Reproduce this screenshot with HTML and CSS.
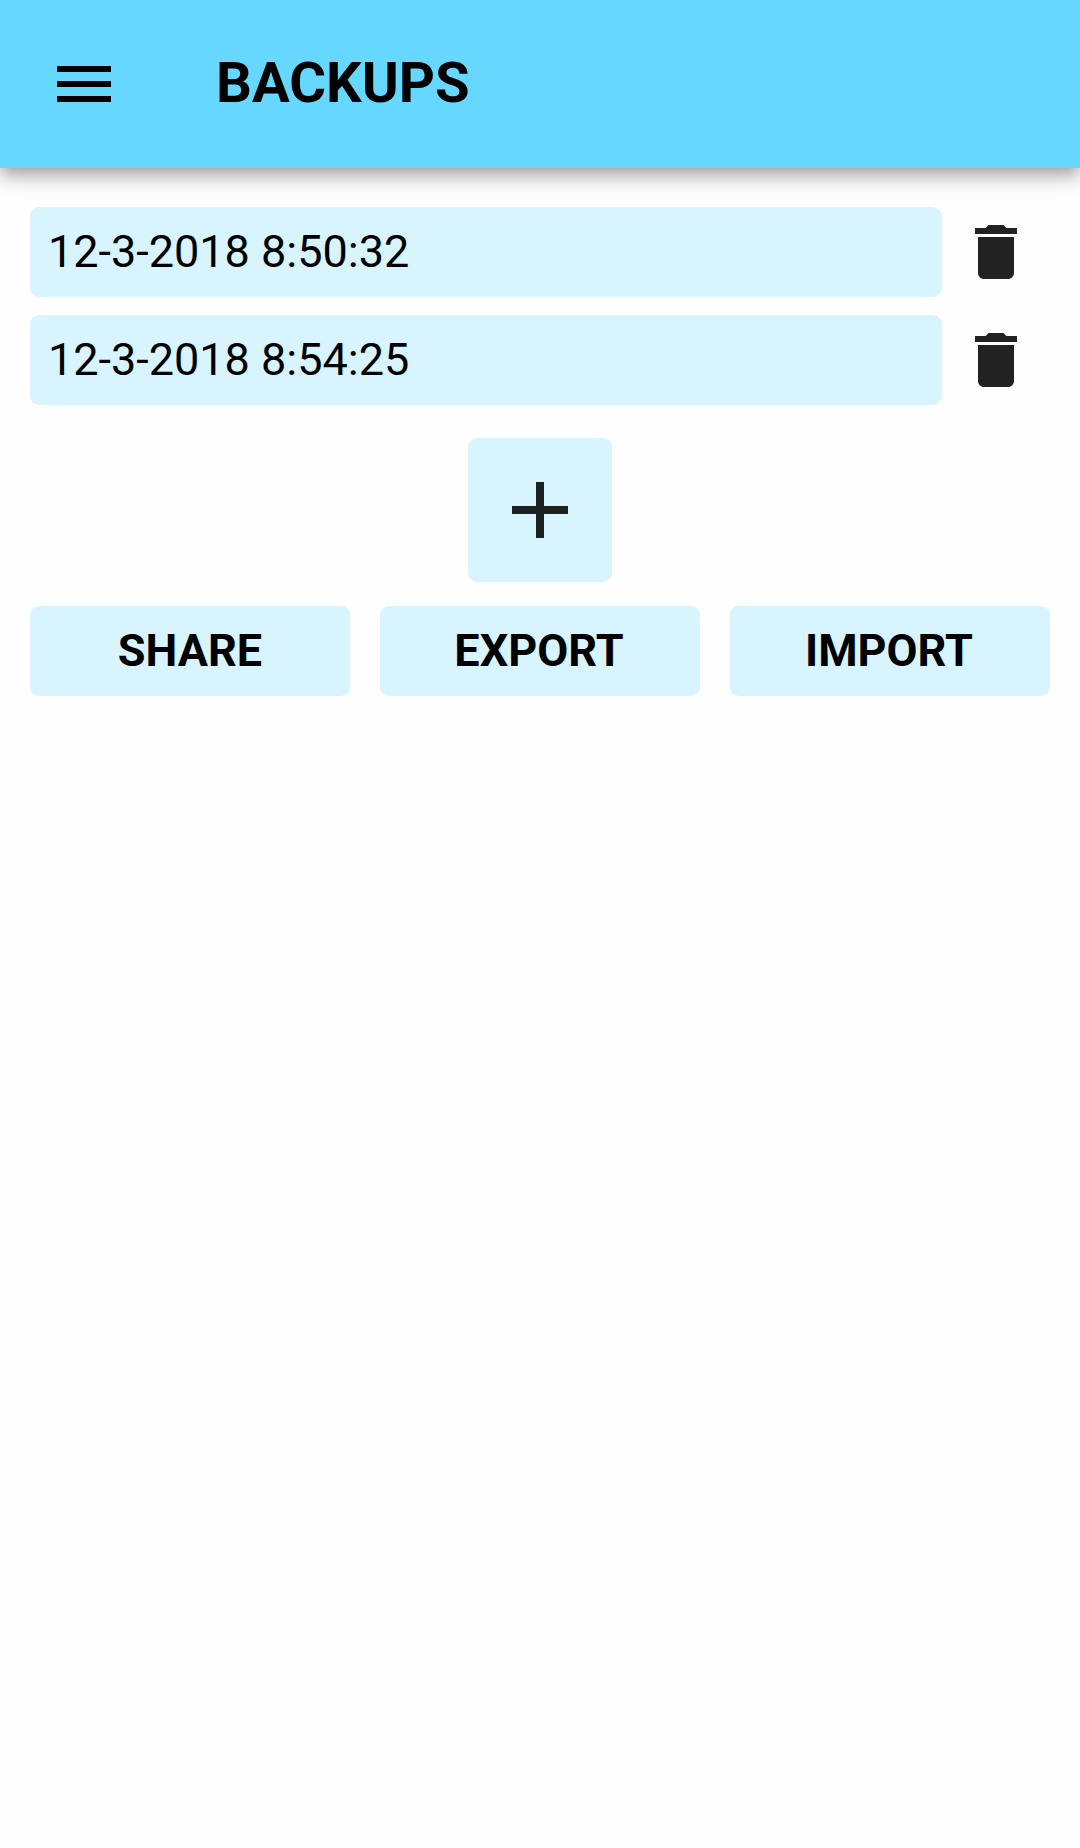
FILE: index.html
```html
<!DOCTYPE html>
<html lang="en">
<head>
<meta charset="utf-8">
<title>Backups</title>
<link rel="stylesheet" href="styles.css">
</head>
<body>
<header class="toolbar">
  <svg class="icon menu" viewBox="0 0 24 24"><path d="M3 18h18v-2H3v2zm0-5h18v-2H3v2zm0-7v2h18V6H3z"/></svg>
  <h1 class="title">BACKUPS</h1>
</header>
<main class="content">
  <ul class="backups">
    <li class="backup">
      <div class="name">12-3-2018 8:50:32</div>
      <svg class="icon delete" viewBox="0 0 24 24"><path d="M6 19c0 1.1.9 2 2 2h8c1.1 0 2-.9 2-2V7H6v12zM19 4h-3.5l-1-1h-5l-1 1H5v2h14V4z"/></svg>
    </li>
    <li class="backup">
      <div class="name">12-3-2018 8:54:25</div>
      <svg class="icon delete" viewBox="0 0 24 24"><path d="M6 19c0 1.1.9 2 2 2h8c1.1 0 2-.9 2-2V7H6v12zM19 4h-3.5l-1-1h-5l-1 1H5v2h14V4z"/></svg>
    </li>
  </ul>
  <button class="add" aria-label="Add"><svg class="plus" viewBox="0 0 24 24"><path d="M19 13h-6v6h-2v-6H5v-2h6V5h2v6h6v2z"/></svg></button>
  <div class="actions">
    <button class="action">SHARE</button>
    <button class="action nudged">EXPORT</button>
    <button class="action nudged">IMPORT</button>
  </div>
</main>
</body>
</html>
```
FILE: styles.css
```css
* { box-sizing: border-box; }
body {
  margin: 0;
  min-height: 1848px;
  background: #fefefe;
  color: #000;
  font-family: Roboto, sans-serif;
}
button { border: 0; padding: 0; color: inherit; font-family: inherit; }
.icon { display: block; width: 72px; height: 72px; flex: none; }
.toolbar {
  display: flex;
  align-items: center;
  height: 168px;
  padding: 0 48px;
  gap: 96px;
  background: #66d7ff;
  box-shadow: 0 6px 12px -3px rgba(0,0,0,.2), 0 12px 15px rgba(0,0,0,.14), 0 3px 30px rgba(0,0,0,.12);
}
.title { margin: 0; font-size: 56.25px; line-height: 66px; font-weight: 700; padding-bottom: 2px; }
.content { padding: 39px 30px 0; }
.backups { list-style: none; margin: 0; padding: 0; display: flex; flex-direction: column; gap: 18px; }
.backup { display: flex; align-items: center; gap: 18px; }
.name {
  width: 912px;
  height: 90px;
  padding: 0 18px;
  border-radius: 9px;
  background: #d8f4ff;
  font-size: 45px;
  line-height: 90px;
}
.delete { fill: #222; }
.add {
  display: flex;
  align-items: center;
  justify-content: center;
  width: 144px;
  height: 144px;
  margin: 33px auto 24px;
  border-radius: 9px;
  background: #d8f4ff;
}
.plus { width: 96px; height: 96px; fill: rgba(0,0,0,.87); }
.actions { display: flex; gap: 30px; }
.action {
  flex: 1 1 0;
  height: 90px;
  border-radius: 9px;
  background: #d8f4ff;
  font-size: 45px;
  font-weight: 700;
  line-height: 90px;
}
.nudged { text-indent: -2px; }
```
